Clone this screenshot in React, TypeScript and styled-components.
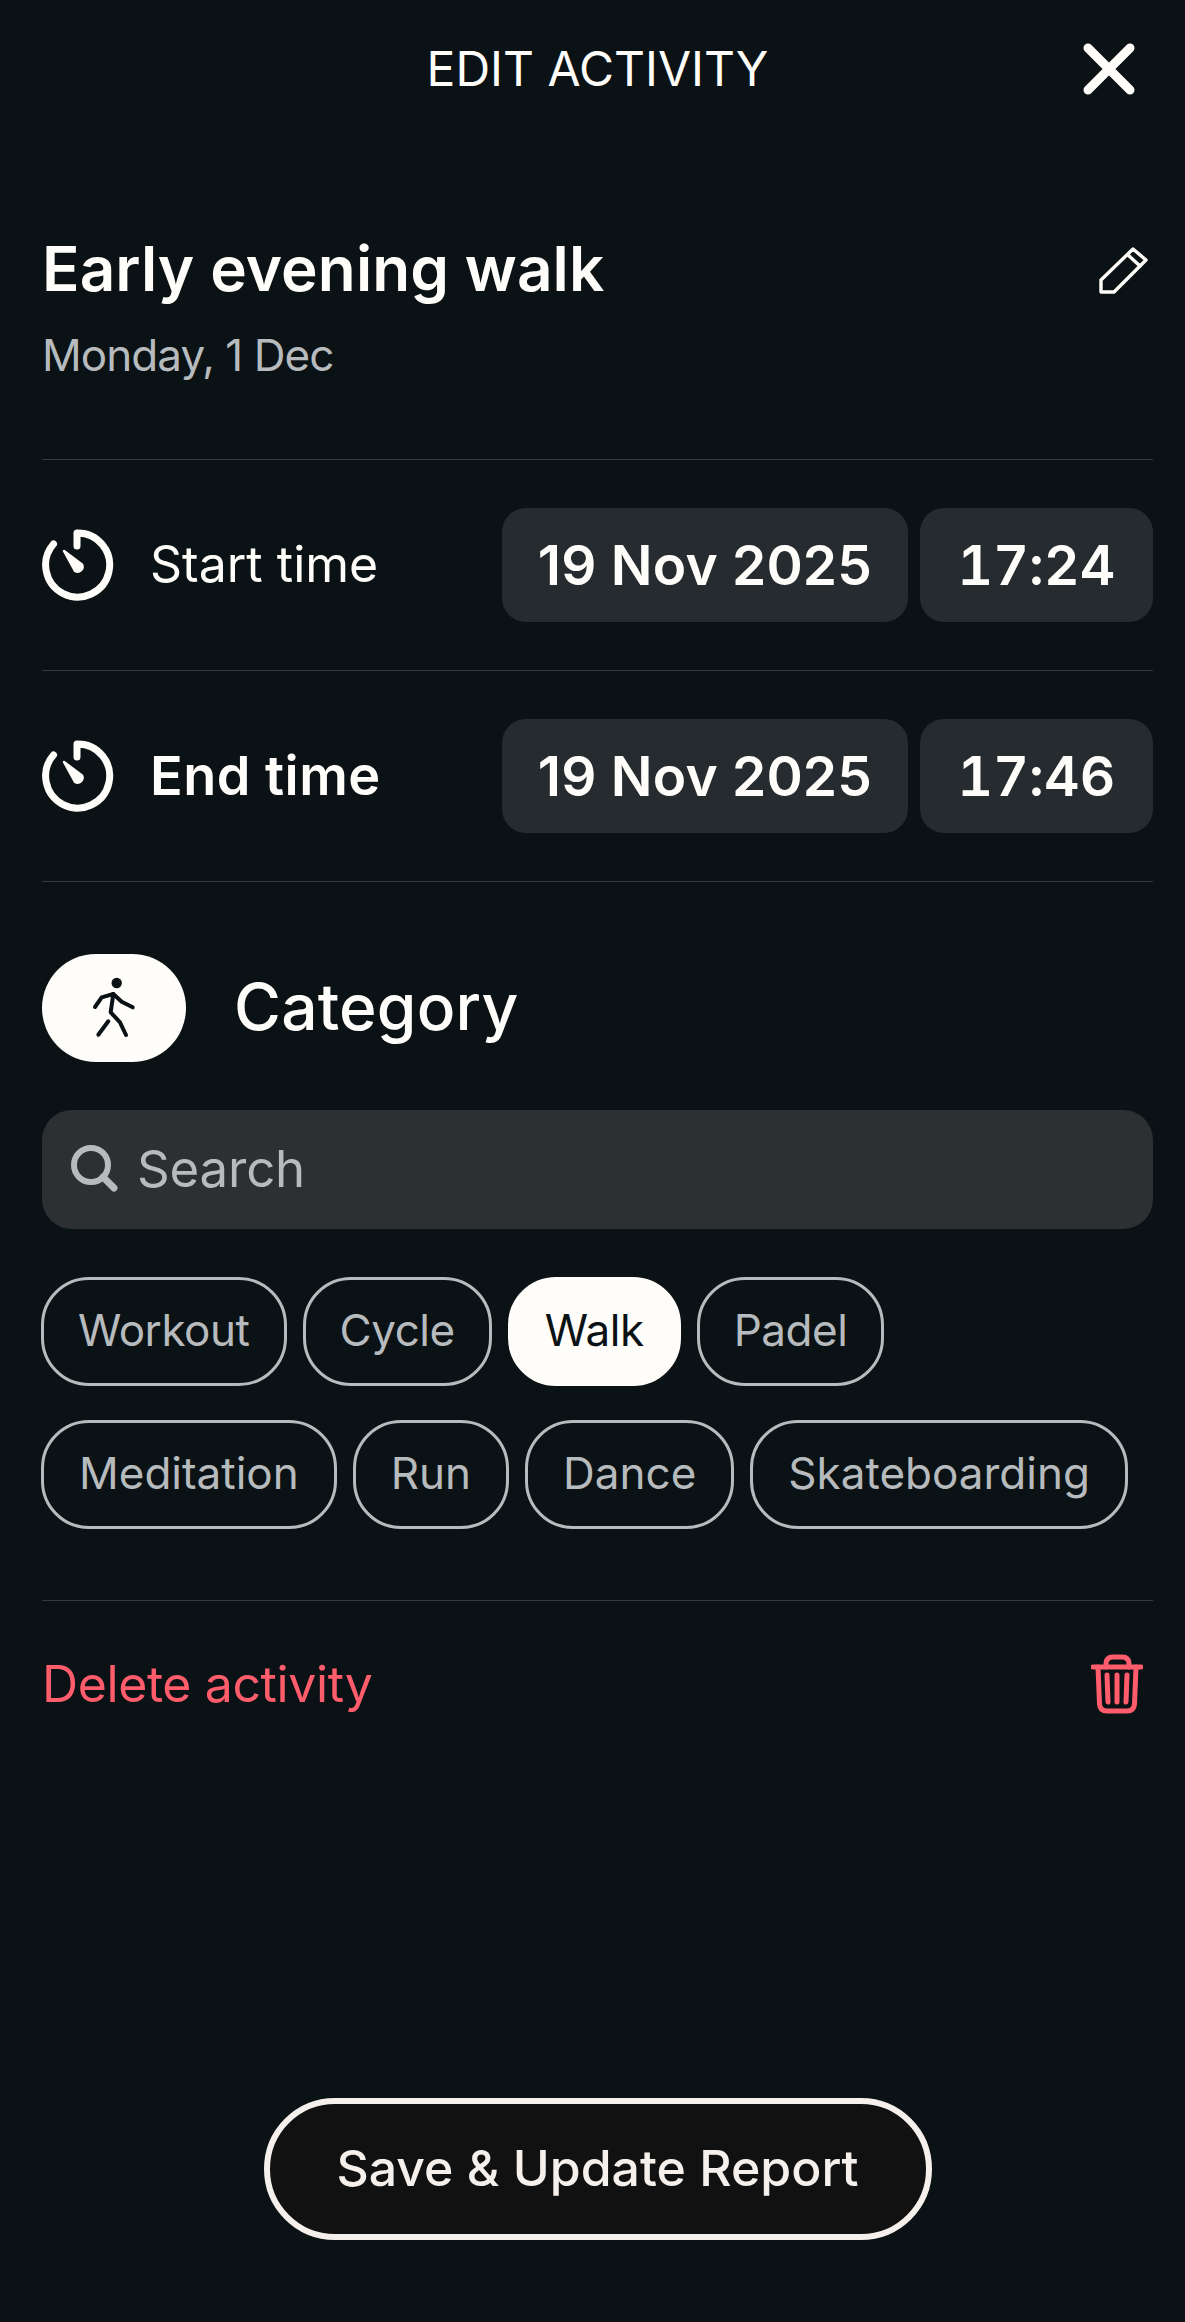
import React from "react";
import styled, { createGlobalStyle } from "styled-components";

const Global = createGlobalStyle`
  html, body { margin: 0; padding: 0; background: #0b1215; }
  * { box-sizing: border-box; }
  body { font-family: Inter, "Liberation Sans", sans-serif; }
`;

const Page = styled.div`
  width: 1185px;
  height: 2322px;
  background: #0b1215;
  color: #fffdf9;
  padding: 0 32px 0 42px;
  display: flex;
  flex-direction: column;
`;
const Header = styled.header`
  height: 136px;
  position: relative;
  display: flex;
  align-items: center;
  justify-content: center;
  margin-left: -42px;
  margin-right: -32px;
`;
const HeaderTitle = styled.h1`
  margin: 0;
  font-size: 48px;
  font-weight: 400;
  letter-spacing: 0;
  padding-left: 10px;
`;
const CloseButton = styled.span`
  position: absolute;
  right: 50px;
  top: 43px;
  width: 52px;
  height: 52px;
  display: block;
`;
const TitleBlock = styled.section`
  height: 323px;
  padding-top: 91px;
  position: relative;
`;
const TitleText = styled.h2`
  margin: 0;
  font-size: 62px;
  line-height: 84px;
  font-weight: 600;
  letter-spacing: 0.1px;
`;
const SubTitle = styled.p`
  margin: 14px 0 0;
  font-size: 44px;
  line-height: 60px;
  letter-spacing: -0.95px;
  color: #b7bbbd;
`;
const EditIcon = styled.span`
  position: absolute;
  right: -2px;
  top: 99px;
  width: 70px;
  height: 70px;
`;
const Divider = styled.div`
  height: 1px;
  background: #363a3e;
  flex: none;
`;
const DeleteDivider = styled(Divider)`
  margin-top: 71px;
`;
const TimeRow = styled.div`
  height: 210px;
  display: flex;
  align-items: center;
  gap: 12px;
`;
const TimeLabel = styled.div<{ $bold?: boolean }>`
  flex: 1;
  display: flex;
  align-items: center;
  gap: 34px;
  font-size: ${(p) => (p.$bold ? 54 : 50)}px;
  font-weight: ${(p) => (p.$bold ? 600 : 400)};
  letter-spacing: ${(p) => (p.$bold ? 0.5 : 0)}px;
  padding-bottom: ${(p) => (p.$bold ? 1 : 3)}px;
`;
const TimerIcon = styled.svg<{ $low?: boolean }>`
  flex: none;
  margin: ${(p) => (p.$low ? 2 : 4)}px 2px 0 0;
`;
const TimePill = styled.div<{ $wide?: boolean }>`
  width: ${(p) => (p.$wide ? 406 : 233)}px;
  height: 114px;
  border-radius: 24px;
  background: #262b2f;
  display: flex;
  align-items: center;
  justify-content: center;
  font-size: 55px;
  font-weight: 600;
  font-variant-numeric: ${(p) => (p.$wide ? "normal" : "tabular-nums")};
  letter-spacing: ${(p) => (p.$wide ? 0.2 : 0.2)}px;
`;
const CategoryHead = styled.div`
  margin-top: 72px;
  display: flex;
  align-items: center;
  gap: 48px;
`;
const CategoryBadge = styled.div`
  width: 144px;
  height: 108px;
  border-radius: 54px;
  background: #fffdf9;
  display: flex;
  align-items: center;
  justify-content: center;
`;
const CategoryTitle = styled.h3`
  margin: 0 0 4px;
  font-size: 64px;
  font-weight: 500;
  letter-spacing: 0.2px;
`;
const SearchBox = styled.div`
  margin-top: 48px;
  height: 119px;
  border-radius: 30px;
  background: #2c3033;
  display: flex;
  align-items: center;
  gap: 19px;
  padding: 0 0 2px 28px;
  font-size: 51px;
  letter-spacing: -0.2px;
  color: #b7bbbd;
`;
const ChipRows = styled.div`
  margin-top: 48px;
  display: flex;
  flex-direction: column;
  gap: 34px;
`;
const ChipRow = styled.div`
  display: flex;
  gap: 16px;
`;
const Chip = styled.div<{ $active?: boolean; $tight?: boolean }>`
  height: 109px;
  padding: 0 ${(p) => (p.$tight ? 34 : 35)}px 3px;
  border-radius: 48px;
  display: flex;
  align-items: center;
  font-size: 44px;
  letter-spacing: ${(p) => (p.$tight ? -0.45 : 0)}px;
  border: 3px solid ${(p) => (p.$active ? "#fffdf9" : "#b7bbbd")};
  background: ${(p) => (p.$active ? "#fffdf9" : "transparent")};
  color: ${(p) => (p.$active ? "#0b1215" : "#b7bbbd")};
  margin-left: -1px;
  & + & { margin-left: 0; }
`;
const DeleteRow = styled.div`
  height: 168px;
  display: flex;
  align-items: center;
  justify-content: space-between;
  color: #ff5c6c;
  font-size: 50px;
  letter-spacing: -0.4px;
  padding: 0 10px 2px 0;
`;
const Spacer = styled.div`
  flex: 1;
`;
const SaveWrap = styled.div`
  display: flex;
  justify-content: center;
  margin: 0 0 82px 0;
`;
const SaveButton = styled.button`
  width: 668px;
  height: 142px;
  border-radius: 71px;
  border: 6px solid #f5f0eb;
  background: #111111;
  color: #f5f0eb;
  font-family: inherit;
  font-size: 50px;
  font-weight: 500;
  letter-spacing: 0;
  padding-bottom: 4px;
`;

const Timer = ({ low }: { low?: boolean }) => (
  <TimerIcon $low={low} width="72" height="74" viewBox="0 0 72 74" fill="none" stroke="#fffdf9" strokeLinecap="round" strokeLinejoin="round">
    <path d="M11.5 15 A32 32 0 1 0 35 4 V17" strokeWidth="7" />
    <path d="M22 22 L40 35.5 A5 5 0 0 1 33 42 Z" fill="#fffdf9" strokeWidth="2.5" />
  </TimerIcon>
);

const chips1 = ["Workout", "Cycle", "Walk", "Padel"];
const chips2 = ["Meditation", "Run", "Dance", "Skateboarding"];

export default function App() {
  return (
    <Page>
      <Global />
      <Header>
        <HeaderTitle>EDIT ACTIVITY</HeaderTitle>
        <CloseButton>
          <svg width="52" height="52" viewBox="0 0 52 52" fill="none" stroke="#fffdf9" strokeWidth="9" strokeLinecap="round">
            <path d="M5 5 L47 47 M47 5 L5 47" />
          </svg>
        </CloseButton>
      </Header>
      <TitleBlock>
        <TitleText>Early evening walk</TitleText>
        <SubTitle>Monday, 1 Dec</SubTitle>
        <EditIcon>
          <svg width="70" height="70" viewBox="0 0 70 70" fill="none" stroke="#fffdf9" strokeWidth="3.4" strokeLinejoin="round" strokeLinecap="round">
            <path d="M16 57 V45 L48 14 L61 25 L29 57 Z" />
            <path d="M43 20 L55 31" />
          </svg>
        </EditIcon>
      </TitleBlock>
      <Divider />
      <TimeRow>
        <TimeLabel><Timer />Start time</TimeLabel>
        <TimePill $wide>19 Nov 2025</TimePill>
        <TimePill>17:24</TimePill>
      </TimeRow>
      <Divider />
      <TimeRow>
        <TimeLabel $bold><Timer low />End time</TimeLabel>
        <TimePill $wide>19 Nov 2025</TimePill>
        <TimePill>17:46</TimePill>
      </TimeRow>
      <Divider />
      <CategoryHead>
        <CategoryBadge>
          <svg width="44" height="62" viewBox="32 18 44 62" fill="none" stroke="#0b1215" strokeWidth="4" strokeLinecap="round" strokeLinejoin="round">
            <circle cx="56.7" cy="24" r="5.2" fill="#0b1215" stroke="none" />
            <path d="M35 48 L41.7 38.3 L53.3 35 L61.7 42.7 L72.7 48.3" />
            <path d="M53.3 35 L50.7 53.3 L60 63.3 L66 76" />
            <path d="M48.3 62.3 L38.3 75.7" />
          </svg>
        </CategoryBadge>
        <CategoryTitle>Category</CategoryTitle>
      </CategoryHead>
      <SearchBox>
        <svg width="48" height="48" viewBox="0 0 48 48" fill="none" stroke="#b7bbbd" strokeLinecap="round">
          <circle cx="21" cy="20" r="17" strokeWidth="6" />
          <path d="M33 32 L44 43" strokeWidth="7" />
        </svg>
        Search
      </SearchBox>
      <ChipRows>
        <ChipRow>
          {chips1.map((c) => <Chip key={c} $tight $active={c === "Walk"}>{c}</Chip>)}
        </ChipRow>
        <ChipRow>
          {chips2.map((c) => <Chip key={c}>{c}</Chip>)}
        </ChipRow>
      </ChipRows>
      <DeleteDivider />
      <DeleteRow>
        Delete activity
        <svg width="52" height="60" viewBox="0 0 52 60" fill="none" stroke="#ff5c6c" strokeWidth="5" strokeLinecap="round" strokeLinejoin="round">
          <path d="M2 13 H50" />
          <path d="M15 13 V10 Q15 3 22 3 H31 Q38 3 38 10 V13" />
          <path d="M7 13 L8.5 50 Q9 57 16 57 H36 Q43 57 43.5 50 L45 13" />
          <path d="M16 21 L17 48 M26 21 V48 M36 21 L35 48" />
        </svg>
      </DeleteRow>
      <Spacer />
      <SaveWrap>
        <SaveButton>Save &amp; Update Report</SaveButton>
      </SaveWrap>
    </Page>
  );
}
